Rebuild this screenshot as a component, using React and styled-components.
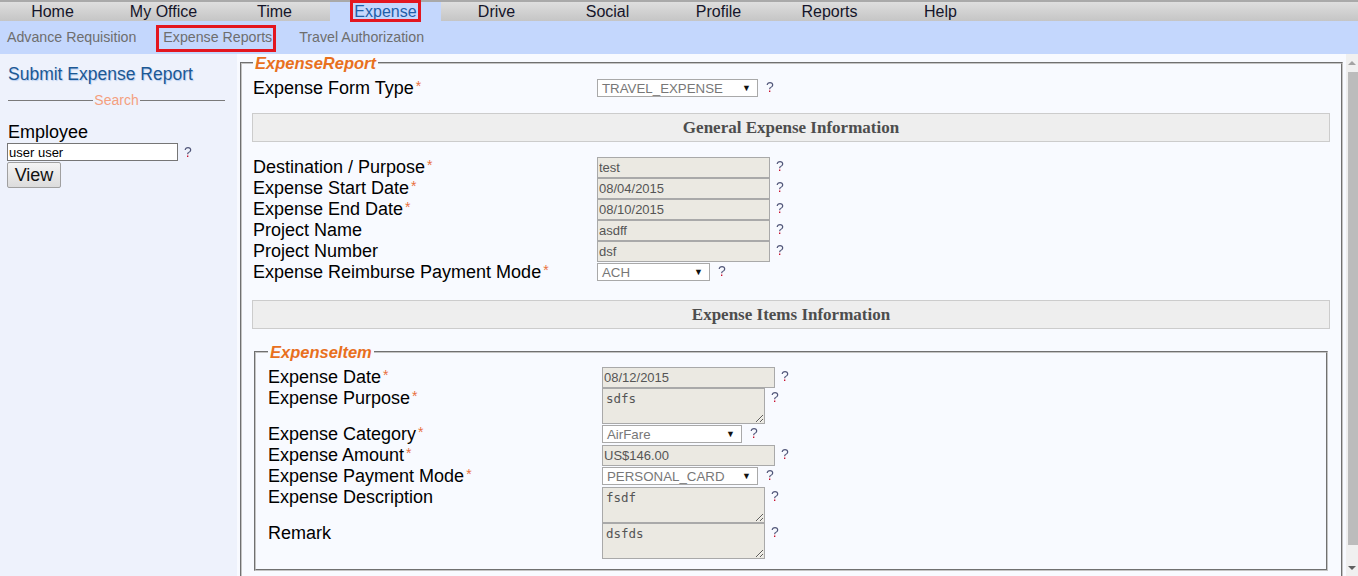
import styled, { createGlobalStyle } from "styled-components";

const GlobalStyle = createGlobalStyle`
  html, body {
    margin: 0;
    padding: 0;
    background: #f8faff;
    font-family: "Liberation Sans", Arial, sans-serif;
    overflow: hidden;
  }
`;

const topItems = ["Home", "My Office", "Time", "Expense", "Drive", "Social", "Profile", "Reports", "Help"];
const subItems = ["Advance Requisition", "Expense Reports", "Travel Authorization"];

const reportRows = [
  { label: "Destination / Purpose", req: true, value: "test" },
  { label: "Expense Start Date", req: true, value: "08/04/2015" },
  { label: "Expense End Date", req: true, value: "08/10/2015" },
  { label: "Project Name", value: "asdff" },
  { label: "Project Number", value: "dsf" },
];

const Help = () => <QMark>?</QMark>;

const Label = ({ text, req, width }) => (
  <LabelCell $w={width}>
    {text}
    {req && <Req>*</Req>}
  </LabelCell>
);

const Select = ({ value, width }) => (
  <SelectBox $w={width}>
    <span>{value}</span>
    <Caret>▼</Caret>
  </SelectBox>
);

const App = () => {
  return (
    <>
      <GlobalStyle />
      <TopNav>
        {topItems.map((item) => (
          <NavItem key={item} $active={item === "Expense"}>
            {item}
          </NavItem>
        ))}
      </TopNav>
      <SubNav>
        {subItems.map((item) => (
          <SubItem key={item} $marked={item === "Expense Reports"}>
            {item}
          </SubItem>
        ))}
      </SubNav>
      <Body>
        <Sidebar>
          <SideTitle>Submit Expense Report</SideTitle>
          <Divider>
            <Line />
            <DividerText>Search</DividerText>
            <Line />
          </Divider>
          <SideLabel>Employee</SideLabel>
          <SideInputRow>
            <SideInput readOnly value="user user" />
            <Help />
          </SideInputRow>
          <ViewButton>View</ViewButton>
        </Sidebar>

        <Main>
          <Fieldset>
            <Legend>ExpenseReport</Legend>
            <Row>
              <Label text="Expense Form Type" req width={344} />
              <SelectWrap>
                <Select value="TRAVEL_EXPENSE" width={161} />
                <Help />
              </SelectWrap>
            </Row>
            <SectionHead $top={14} $bottom={15}>General Expense Information</SectionHead>
            {reportRows.map((r) => (
              <Row key={r.label}>
                <Label text={r.label} req={r.req} width={344} />
                <Field readOnly value={r.value} $w={173} />
                <Help />
              </Row>
            ))}
            <Row>
              <Label text="Expense Reimburse Payment Mode" req width={344} />
              <SelectWrap>
                <Select value="ACH" width={113} />
                <Help />
              </SelectWrap>
            </Row>
            <SectionHead $top={17} $bottom={14}>Expense Items Information</SectionHead>

            <InnerFieldset>
              <Legend>ExpenseItem</Legend>
              <Row>
                <Label text="Expense Date" req width={334} />
                <Field readOnly value="08/12/2015" $w={173} />
                <Help />
              </Row>
              <Row>
                <Label text="Expense Purpose" req width={334} />
                <Area readOnly value="sdfs" />
                <Help />
              </Row>
              <Row>
                <Label text="Expense Category" req width={334} />
                <SelectWrap>
                  <Select value="AirFare" width={140} />
                  <Help />
                </SelectWrap>
              </Row>
              <Row>
                <Label text="Expense Amount" req width={334} />
                <Field readOnly value="US$146.00" $w={173} />
                <Help />
              </Row>
              <Row>
                <Label text="Expense Payment Mode" req width={334} />
                <SelectWrap>
                  <Select value="PERSONAL_CARD" width={156} />
                  <Help />
                </SelectWrap>
              </Row>
              <Row>
                <Label text="Expense Description" width={334} />
                <Area readOnly value="fsdf" />
                <Help />
              </Row>
              <Row>
                <Label text="Remark" width={334} />
                <Area readOnly value="dsfds" />
                <Help />
              </Row>
            </InnerFieldset>
          </Fieldset>
        </Main>

        <ScrollBar>
          <ArrowBox>
            <ArrowUp />
          </ArrowBox>
          <Thumb />
          <ArrowBox>
            <ArrowDown />
          </ArrowBox>
        </ScrollBar>
      </Body>
    </>
  );
};

const TopNav = styled.nav`
  display: flex;
  height: 19px;
  margin-left: -3px;
  border-top: 2px solid #a9a9a9;
  background: linear-gradient(#dedede, #c5c5c5);
`;
const NavItem = styled.div`
  position: relative;
  width: 111px;
  text-align: center;
  font-size: 16px;
  line-height: 19px;
  color: ${(p) => (p.$active ? "#1f5fa8" : "#15152a")};
  background: ${(p) => (p.$active ? "#c4d7fd" : "transparent")};
  &::after {
    content: "";
    display: ${(p) => (p.$active ? "block" : "none")};
    position: absolute;
    top: -2px;
    left: 50%;
    width: 71px;
    height: 22px;
    margin-left: -36px;
    box-sizing: border-box;
    border: 3px solid #e3161f;
  }
`;
const SubNav = styled.div`
  display: flex;
  align-items: center;
  gap: 27px;
  height: 33px;
  padding-left: 7px;
  background: #c4d7fd;
`;
const SubItem = styled.div`
  position: relative;
  font-size: 14.2px;
  line-height: 21px;
  color: #6e6e6e;
  &::after {
    content: "";
    display: ${(p) => (p.$marked ? "block" : "none")};
    position: absolute;
    top: -2px;
    bottom: -4px;
    left: -7px;
    right: -4px;
    border: 3px solid #e3161f;
  }
`;
const Body = styled.div`
  display: flex;
  height: calc(100vh - 54px);
`;
const Sidebar = styled.aside`
  width: 237px;
  flex-shrink: 0;
  box-sizing: border-box;
  padding: 10px 12px 0 7px;
  background: #eef2fc;
`;
const SideTitle = styled.div`
  font-size: 17.5px;
  line-height: 20px;
  padding-left: 1px;
  color: #1c5894;
  text-shadow: 1px 1px 1px #b6cdef;
`;
const Divider = styled.div`
  display: flex;
  align-items: center;
  margin-top: 8px;
  padding-left: 1px;
`;
const Line = styled.div`
  flex: 1;
  height: 1px;
  background: #7a7a7a;
`;
const DividerText = styled.span`
  font-size: 14px;
  line-height: 16px;
  color: #f4a07f;
  padding: 0 1px;
`;
const SideLabel = styled.div`
  margin-top: 14px;
  padding-left: 1px;
  font-size: 18px;
  line-height: 21px;
  color: #000;
`;
const SideInputRow = styled.div`
  display: flex;
  align-items: flex-start;
`;
const SideInput = styled.input`
  width: 171px;
  height: 18px;
  box-sizing: border-box;
  margin: 0;
  padding: 0 1px;
  border: 1px solid #767676;
  background: #fff;
  font-family: "Liberation Sans", Arial, sans-serif;
  font-size: 13px;
  color: #000;
  outline: none;
`;
const ViewButton = styled.button`
  display: block;
  width: 54px;
  height: 26px;
  margin: 1px 0 0;
  padding: 0;
  border: 1px solid #a0a0a0;
  border-radius: 2px;
  background: linear-gradient(#f4f4f4, #dcdcdc);
  font-family: "Liberation Sans", Arial, sans-serif;
  font-size: 18px;
  color: #111;
`;
const Main = styled.main`
  flex: 1;
  overflow: hidden;
  background: #f8faff;
`;
const Fieldset = styled.fieldset`
  margin: 0 3px;
  padding: 0 11px 12px 11px;
  border: 2px groove #c4c4c4;
  min-width: 0;
`;
const InnerFieldset = styled.fieldset`
  margin: 0 2px 0 1px;
  padding: 0 12px 10px 12px;
  border: 2px groove #c4c4c4;
  min-width: 0;
`;
const Legend = styled.legend`
  padding: 0 2px;
  font-size: 16.5px;
  line-height: 18px;
  font-weight: bold;
  font-style: italic;
  color: #e8701e;
  margin-bottom: 6px;
`;
const Row = styled.div`
  display: flex;
  align-items: flex-start;
  min-height: 21px;
`;
const LabelCell = styled.div`
  width: ${(p) => p.$w}px;
  flex-shrink: 0;
  height: 21px;
  font-size: 18px;
  line-height: 21px;
  color: #000;
  white-space: nowrap;
`;
const Req = styled.span`
  position: relative;
  top: -3px;
  margin-left: 2px;
  font-size: 14px;
  line-height: 0;
  color: #e9703d;
`;
const Field = styled.input`
  width: ${(p) => p.$w}px;
  height: 21px;
  box-sizing: border-box;
  margin: 0;
  padding: 0 1px;
  border: 1px solid #a9a9a9;
  background: #ebe9e2;
  font-family: "Liberation Sans", Arial, sans-serif;
  font-size: 13px;
  color: #555;
  outline: none;
`;
const Area = styled.textarea`
  width: 163px;
  height: 36px;
  box-sizing: border-box;
  margin: 0;
  padding: 3px 3px;
  border: 1px solid #a9a9a9;
  background: #ebe9e2;
  font-family: "DejaVu Sans Mono", "Liberation Mono", monospace;
  font-size: 12.5px;
  line-height: 14px;
  color: #555;
  outline: none;
`;
const SelectWrap = styled.div`
  display: flex;
  align-items: flex-start;
  padding-top: 1px;
  & > span:last-child {
    margin-left: 8px;
    margin-top: 0;
  }
`;
const SelectBox = styled.div`
  display: flex;
  align-items: center;
  justify-content: space-between;
  width: ${(p) => p.$w}px;
  height: 18px;
  box-sizing: border-box;
  padding: 0 6px 0 4px;
  border: 1px solid #a9a9a9;
  background: #fff;
  font-size: 13.3px;
  color: #777;
`;
const Caret = styled.span`
  font-size: 9px;
  color: #111;
`;
const QMark = styled.span`
  display: inline-block;
  margin-left: 6px;
  margin-top: 1px;
  font-size: 14px;
  line-height: 16px;
  background: linear-gradient(#4f5578 64%, #c8102e 64%);
  -webkit-background-clip: text;
  background-clip: text;
  color: transparent;
`;
const SectionHead = styled.div`
  margin: ${(p) => p.$top}px 0 ${(p) => p.$bottom}px -1px;
  height: 29px;
  box-sizing: border-box;
  border: 1px solid #cccccc;
  background: #eeeeee;
  text-align: center;
  font-family: "Liberation Serif", "Times New Roman", serif;
  font-weight: bold;
  font-size: 17px;
  line-height: 27px;
  color: #4d4d4d;
`;
const ScrollBar = styled.div`
  width: 12px;
  flex-shrink: 0;
  display: flex;
  flex-direction: column;
  background: #f0f0f0;
`;
const ArrowBox = styled.div`
  height: 17px;
  display: flex;
  align-items: center;
  justify-content: center;
`;
const ArrowUp = styled.div`
  width: 0;
  height: 0;
  border-left: 4px solid transparent;
  border-right: 4px solid transparent;
  border-bottom: 4px solid #a3a3a3;
`;
const ArrowDown = styled.div`
  width: 0;
  height: 0;
  border-left: 4px solid transparent;
  border-right: 4px solid transparent;
  border-top: 4px solid #606060;
`;
const Thumb = styled.div`
  flex: 1;
  margin: 1px 0 14px 2px;
  background: #bcbcbc;
`;

export default App;
